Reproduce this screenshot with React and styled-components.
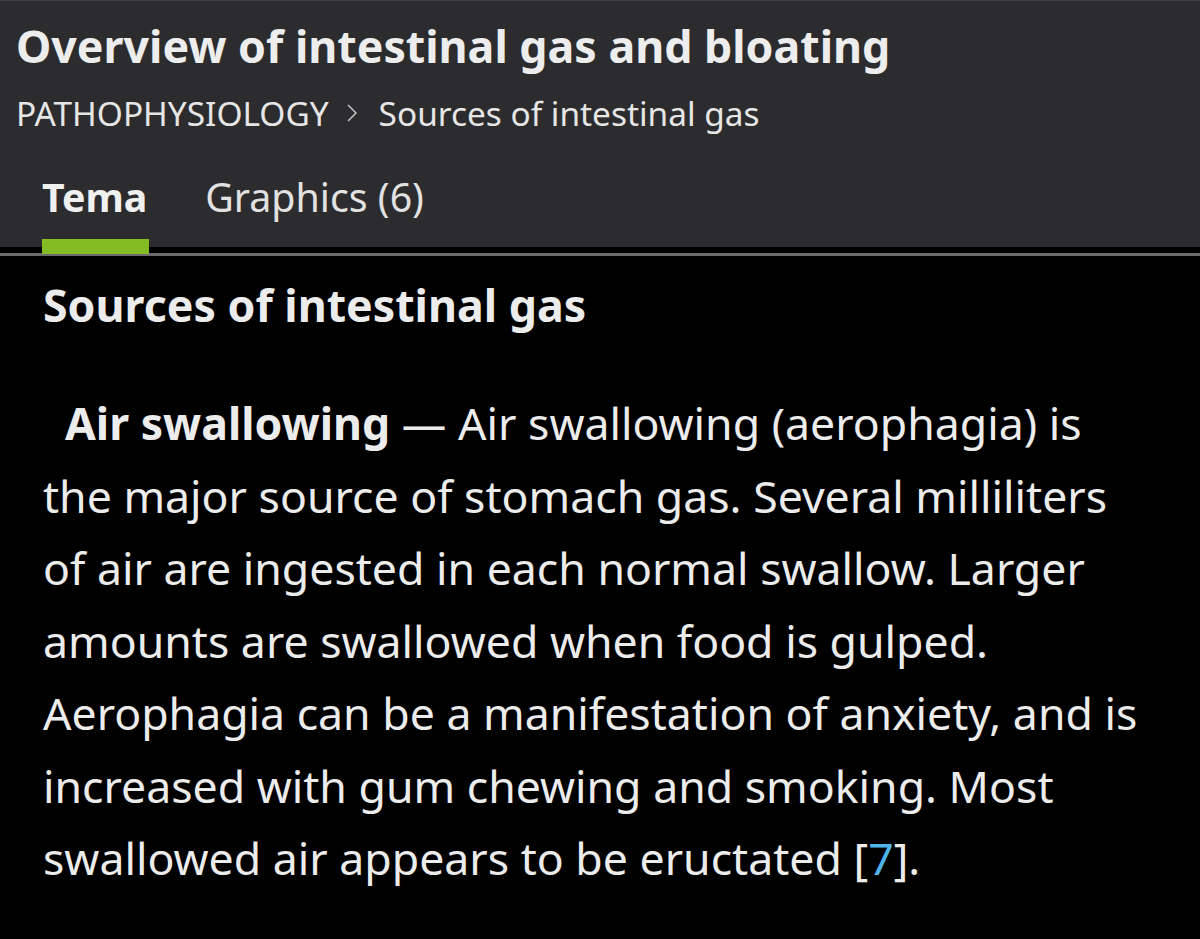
import React from "react";
import styled, { createGlobalStyle } from "styled-components";

const Global = createGlobalStyle`
  html, body { margin: 0; padding: 0; background: #000; }
  body { font-family: "Noto Sans", "Open Sans", sans-serif; color: #ececec; }
`;

const Page = styled.div`
  width: 1200px;
  min-height: 939px;
  background: #000;
  overflow: hidden;
`;

const Header = styled.header`
  background: #2c2c2e;
  border-top: 1px solid #404042;
  padding: 17px 16px 0 16px;
  height: 247px;
  box-sizing: border-box;
  display: flex;
  flex-direction: column;
`;

const Title = styled.h1`
  margin: 0;
  font-size: 44.7px;
  font-weight: 700;
  line-height: 56px;
  color: #ededed;
  white-space: nowrap;
`;

const Crumbs = styled.nav`
  display: flex;
  align-items: center;
  margin-top: 19px;
  font-size: 33.4px;
  line-height: 40px;
  color: #e6e6e6;
  white-space: nowrap;
`;

const Sep = styled.span`
  display: inline-flex;
  margin: 0 21px 0 17px;
`;

const Tabs = styled.div`
  display: flex;
  gap: 58px;
  margin-top: 40px;
  padding-left: 26px;
`;

const Tab = styled.div`
  position: relative;
  font-size: 39.3px;
  line-height: 48px;
  font-weight: ${(p) => (p.$active ? 700 : 400)};
  color: ${(p) => (p.$active ? "#f0f0f0" : "#e2e2e2")};
  white-space: nowrap;
`;

const Indicator = styled.span`
  position: absolute;
  left: 0;
  width: 107px;
  top: 66px;
  height: 15px;
  background: #84bd23;
`;

const Divider = styled.div`
  height: 6px;
  background: #000;
  border-bottom: 3px solid #6b6b6b;
`;

const Content = styled.main`
  padding: 21px 43px 0 43px;
`;

const Heading = styled.h2`
  margin: 0;
  font-size: 44.7px;
  font-weight: 700;
  line-height: 56px;
  color: #ececec;
`;

const Para = styled.p`
  margin: 54px 0 0 0;
  font-size: 44.6px;
  line-height: 72.5px;
  color: #ececec;
  width: 1108px;
`;

const Lead = styled.strong`
  font-weight: 700;
  margin-left: 22px;
`;

const Ref = styled.a`
  color: #4fb2ea;
  text-decoration: none;
`;

function Chevron() {
  return (
    <svg width="12" height="22" viewBox="0 0 12 22" aria-hidden="true">
      <path d="M2 3 L10 11 L2 19" fill="none" stroke="#c4c4c4" strokeWidth="1.5" />
    </svg>
  );
}

export default function App() {
  return (
    <Page>
      <Global />
      <Header>
        <Title>Overview of intestinal gas and bloating</Title>
        <Crumbs>
          <span>PATHOPHYSIOLOGY</span>
          <Sep>
            <Chevron />
          </Sep>
          <span>Sources of intestinal gas</span>
        </Crumbs>
        <Tabs>
          <Tab $active>
            Tema
            <Indicator />
          </Tab>
          <Tab>Graphics (6)</Tab>
        </Tabs>
      </Header>
      <Divider />
      <Content>
        <Heading>Sources of intestinal gas</Heading>
        <Para>
          <Lead>Air swallowing</Lead> — Air swallowing (aerophagia) is the major source of
          stomach gas. Several milliliters of air are ingested in each normal swallow. Larger
          amounts are swallowed when food is gulped. Aerophagia can be a manifestation of
          anxiety, and is increased with gum chewing and smoking. Most swallowed air appears to
          be eructated [<Ref href="#">7</Ref>].
        </Para>
      </Content>
    </Page>
  );
}
